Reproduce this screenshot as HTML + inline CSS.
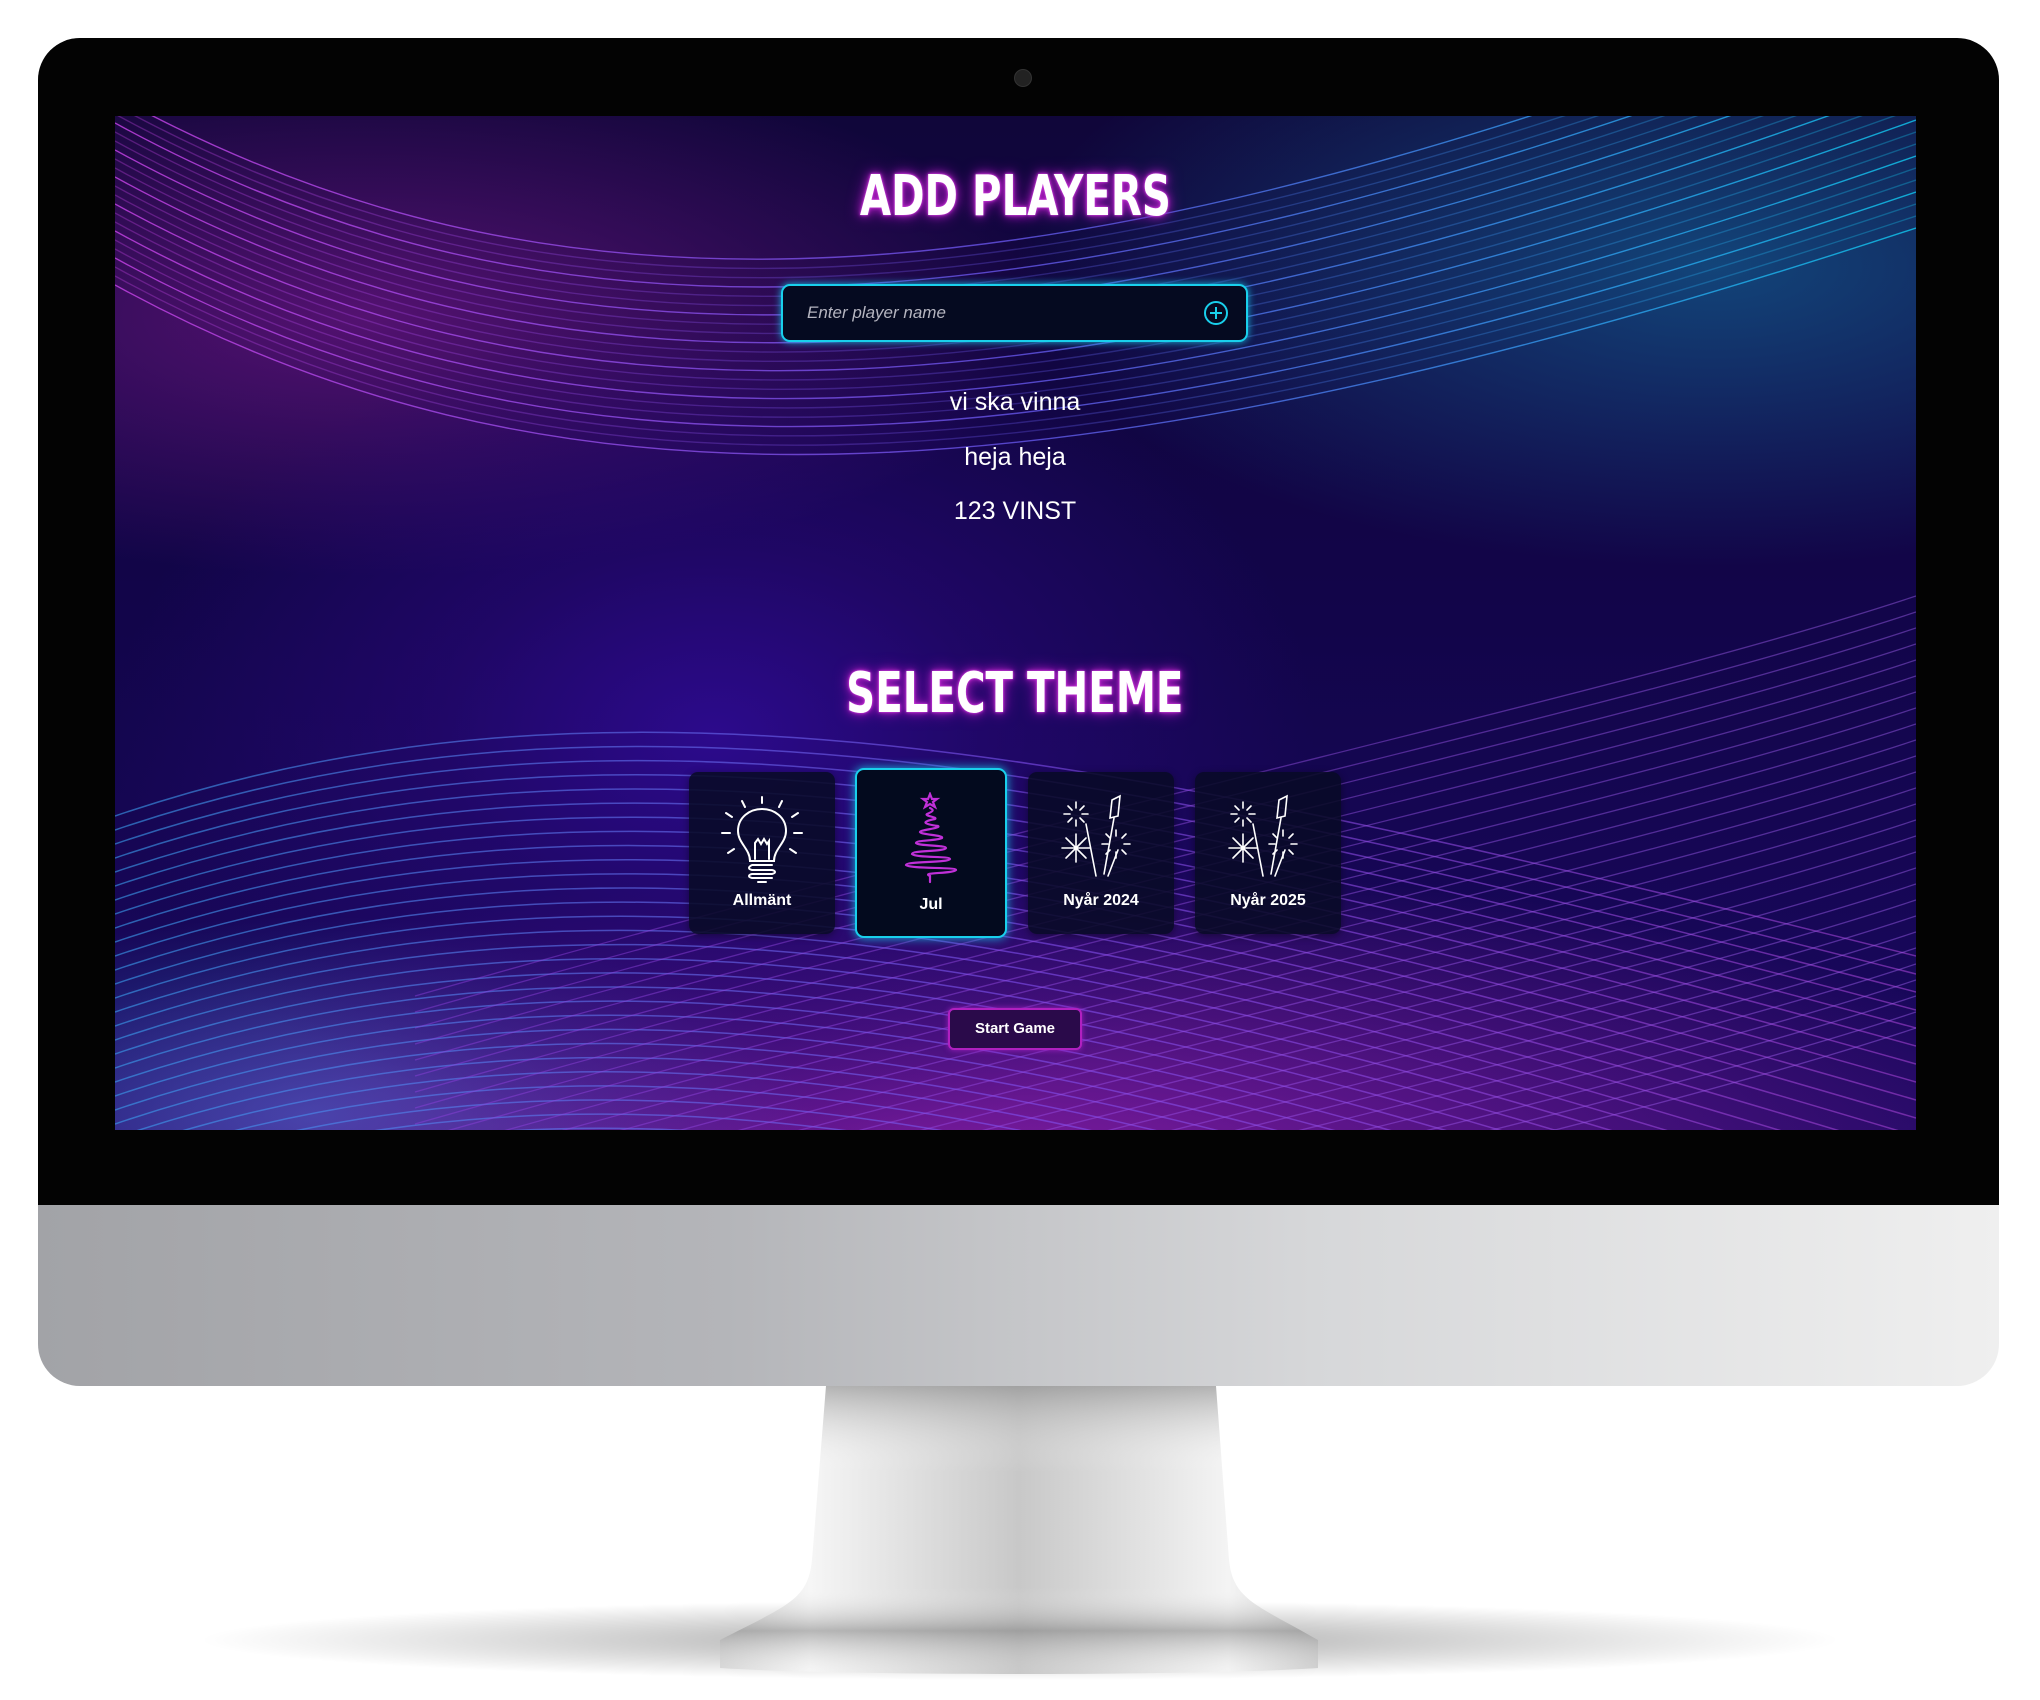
<!DOCTYPE html>
<html><head><meta charset="utf-8">
<style>
html,body{margin:0;padding:0;background:#fff;width:2040px;height:1700px;overflow:hidden;font-family:"Liberation Sans",sans-serif}
.abs{position:absolute}
#body{left:38px;top:38px;width:1961px;height:1348px;border-radius:42px;overflow:hidden;background:linear-gradient(90deg,#a2a3a7 0%,#b4b5b9 35%,#d6d7d9 65%,#efefef 100%)}
#bezel{left:0;top:0;width:1961px;height:1167px;background:#030303}
#cam{left:976px;top:31px;width:16px;height:16px;border-radius:50%;background:#222;border:1px solid #333}
#screen{left:77px;top:78px;width:1801px;height:1014px;overflow:hidden;
background:
radial-gradient(ellipse 600px 420px at 600px 620px,#2c0a8c 0%,rgba(40,8,120,.6) 45%,rgba(20,5,70,0) 100%),
radial-gradient(ellipse 700px 300px at 1600px 150px,rgba(20,120,170,.55) 0%,rgba(10,40,90,0) 100%),
radial-gradient(ellipse 700px 260px at 250px 200px,rgba(150,30,160,.5) 0%,rgba(60,10,90,0) 100%),
radial-gradient(ellipse 1100px 300px at 900px 1050px,rgba(190,40,200,.6) 0%,rgba(90,20,150,0) 100%),
radial-gradient(ellipse 500px 200px at 200px 1000px,rgba(60,140,230,.5) 0%,rgba(60,140,230,0) 100%),
linear-gradient(180deg,#10063a 0%,#12054a 50%,#1a0860 100%)}
#waves{position:absolute;left:0;top:0}
#content{position:absolute;left:-5px;top:0;width:1810px;height:1014px}
.title{position:absolute;left:0;width:1810px;text-align:center;font-family:"DejaVu Sans Condensed","DejaVu Sans",sans-serif;font-weight:bold;font-size:56px;color:#fff;
text-shadow:0 0 2px #d040e0,0 0 4px #c030d0,0 0 10px #b020c0,0 0 18px #9010b0}
.title span{display:inline-block;transform:scaleX(.8)}
#input{left:671px;top:168px;width:463px;height:54px;border:2px solid #19d0ec;border-radius:9px;background:#050a20;box-shadow:0 0 8px #19b8e0}
#input span{position:absolute;left:24px;top:17px;font-style:italic;font-size:17px;color:#b5b5c0}
#plus{position:absolute;right:18px;top:15px;width:20px;height:20px;border:2px solid #19d0ec;border-radius:50%}
#plus:before{content:"";position:absolute;left:4px;top:9px;width:12px;height:2px;background:#19d0ec}
#plus:after{content:"";position:absolute;left:9px;top:4px;width:2px;height:12px;background:#19d0ec}
.name{position:absolute;left:0;width:1810px;text-align:center;color:#fff;font-size:25px}
.card{position:absolute;top:656px;width:146px;height:162px;border-radius:9px;background:rgba(8,10,38,.88);box-shadow:0 2px 8px rgba(0,0,0,.4)}
.card .lbl{position:absolute;left:0;width:100%;top:120px;text-align:center;color:#fff;font-weight:bold;font-size:16px}
#screen .card svg{position:absolute;left:28px;top:22px}
#jul{left:745px;top:652px;width:148px;height:166px;border:2px solid #19d0ec;box-shadow:0 0 10px #19b8e0;background:#030a1e}
#start{left:838px;top:892px;width:130px;height:38px;border:2px solid #b020c0;border-radius:6px;background:#2a0a4a;color:#fff;font-weight:bold;font-size:15px;text-align:center;line-height:38px;box-shadow:0 0 6px #a020c0}
#stand{left:0;top:0}
</style></head><body>
<div id="body" class="abs">
 <div id="bezel" class="abs">
  <div id="cam" class="abs"></div>
  <div id="screen" class="abs">
   <svg id="waves" width="1801" height="1014"></svg>
   <div id="content">
   <div class="title" style="top:48px"><span>ADD PLAYERS</span></div>
   <div id="input" class="abs"><span>Enter player name</span><div id="plus"></div></div>
   <div class="name" style="top:272px">vi ska vinna</div>
   <div class="name" style="top:327px">heja heja</div>
   <div class="name" style="top:381px">123 VINST</div>
   <div class="title" style="top:545px"><span>SELECT THEME</span></div>
   <div class="card" style="left:579px">
    <svg width="90" height="90" viewBox="-5 -5 90 90" fill="none" stroke="#fff" stroke-width="2" stroke-linecap="round">
     <path d="M28 62 C28 50 16 44 16 32 C16 18 28 10 40 10 C52 10 64 18 64 32 C64 44 52 50 52 62 Z"/>
     <path d="M33 60 L33 44 L36 40 L39 45 L42 40 L45 45 L47 42 L47 60"/>
     <path d="M30 66 H50 M30 66 C26 68 26 70 30 71 H50 C54 72 54 74 50 75 H30 C26 76 26 78 30 79 H50 M36 83 H44"/>
     <path d="M40 -2 V4 M20 2 L23 8 M60 2 L57 8 M4 14 L10 18 M76 14 L70 18 M0 34 H8 M72 34 H80 M6 54 L12 50 M74 54 L68 50"/>
    </svg>
    <div class="lbl">Allmänt</div>
   </div>
   <div class="card" id="jul" style="left:745px;top:652px">
    <svg width="90" height="100" viewBox="-5 0 90 100" fill="none" stroke="#c030d8" stroke-width="2.2" stroke-linecap="round">
     <path d="M40 2 L42 7 L47 7 L43 10 L45 15 L40 12 L35 15 L37 10 L33 7 L38 7 Z"/>
     <path d="M40 16 C44 18 44 19 37 22 C34 24 48 25 45 27 C30 30 34 32 48 34 C52 36 30 38 30 40 C32 43 54 43 52 46 C46 49 26 48 26 51 C28 54 56 53 56 56 C54 60 22 58 22 62 C26 66 60 64 60 67 C58 71 16 69 16 73 C20 77 66 75 66 78 C62 82 30 80 40 84 V90"/>
    </svg>
    <div class="lbl" style="top:126px">Jul</div>
   </div>
   <div class="card" style="left:918px">
    <svg width="90" height="90" viewBox="0 0 90 90" fill="none" stroke="#fff" stroke-width="1.6" stroke-linecap="round">
     <path d="M20 8 V14 M20 26 V32 M8 20 H14 M26 20 H32 M12 12 L16 16 M24 24 L28 28 M28 12 L24 16 M16 24 L12 28"/>
     <path d="M10 44 L30 64 M30 44 L10 64 M20 40 V68 M6 54 H34"/>
     <path d="M60 36 V42 M60 58 V64 M46 50 H52 M68 50 H74 M50 40 L54 44 M66 56 L70 60 M70 40 L66 44 M54 56 L50 60"/>
     <path d="M56 6 L64 2 L62 22 L54 24 Z M58 24 L48 80 M30 30 L40 82 M62 56 L52 82"/>
    </svg>
    <div class="lbl">Nyår 2024</div>
   </div>
   <div class="card" style="left:1085px">
    <svg width="90" height="90" viewBox="0 0 90 90" fill="none" stroke="#fff" stroke-width="1.6" stroke-linecap="round">
     <path d="M20 8 V14 M20 26 V32 M8 20 H14 M26 20 H32 M12 12 L16 16 M24 24 L28 28 M28 12 L24 16 M16 24 L12 28"/>
     <path d="M10 44 L30 64 M30 44 L10 64 M20 40 V68 M6 54 H34"/>
     <path d="M60 36 V42 M60 58 V64 M46 50 H52 M68 50 H74 M50 40 L54 44 M66 56 L70 60 M70 40 L66 44 M54 56 L50 60"/>
     <path d="M56 6 L64 2 L62 22 L54 24 Z M58 24 L48 80 M30 30 L40 82 M62 56 L52 82"/>
    </svg>
    <div class="lbl">Nyår 2025</div>
   </div>
   <div id="start" class="abs">Start Game</div>
   </div>
  </div>
 </div>
</div>
<svg id="stand" class="abs" width="2040" height="1700">
 <defs>
  <linearGradient id="ng" x1="0" x2="1">
   <stop offset="0" stop-color="#d8d8d8"/><stop offset=".15" stop-color="#f6f6f6"/><stop offset=".5" stop-color="#c8c8c8"/><stop offset=".85" stop-color="#f4f4f4"/><stop offset="1" stop-color="#cfcfcf"/>
  </linearGradient>
  <linearGradient id="nv" x1="0" y1="0" x2="0" y2="1">
   <stop offset="0" stop-color="#888" stop-opacity=".6"/><stop offset=".3" stop-color="#fff" stop-opacity="0"/><stop offset=".7" stop-color="#fff" stop-opacity="0"/><stop offset=".85" stop-color="#777" stop-opacity=".5"/><stop offset="1" stop-color="#ddd" stop-opacity="0"/>
  </linearGradient>
  <radialGradient id="sh" cx=".5" cy=".5" r=".5"><stop offset="0" stop-color="#000" stop-opacity=".35"/><stop offset="1" stop-color="#000" stop-opacity="0"/></radialGradient>
 </defs>
 <ellipse cx="1020" cy="1640" rx="820" ry="40" fill="url(#sh)"/>
 <path d="M826 1386 H1216 L1229 1560 C1233 1600 1257 1605 1318 1640 L1318 1668 C1200 1676 840 1676 720 1668 L720 1640 C788 1605 808 1600 812 1560 Z" fill="url(#ng)"/>
 <path d="M826 1386 H1216 L1229 1560 C1233 1600 1257 1605 1318 1640 L1318 1668 C1200 1676 840 1676 720 1668 L720 1640 C788 1605 808 1600 812 1560 Z" fill="url(#nv)"/>
</svg>
<script>
var s=document.getElementById('waves'),h='';
h+='<defs><linearGradient id="g1" x1="0" x2="1"><stop offset="0" stop-color="#c040e0"/><stop offset=".5" stop-color="#6050e0"/><stop offset="1" stop-color="#10c0e8"/></linearGradient>'+
'<linearGradient id="g2" x1="0" x2="1"><stop offset="0" stop-color="#3aa0f0"/><stop offset=".5" stop-color="#8050f0"/><stop offset="1" stop-color="#a040d0"/></linearGradient>'+
'<linearGradient id="g3" x1="0" x2="1"><stop offset="0" stop-color="#9040e0"/><stop offset="1" stop-color="#a060f0"/></linearGradient></defs>';
for(var i=0;i<22;i++){var y=-20+i*9;
h+='<path d="M0 '+(y)+' C420 '+(y+230)+' 900 '+(y+240)+' 1801 '+(y-120+i*3)+'" stroke="url(#g1)" stroke-width="1.4" fill="none" opacity="'+(0.35+0.5*(i%3==0))+'"/>';}
for(var i=0;i<30;i++){var y=700+i*14;
h+='<path d="M0 '+y+' C500 '+(y-170)+' 1000 '+(y-60)+' 1801 '+(y+140+i*4)+'" stroke="url(#g2)" stroke-width="1.5" fill="none" opacity=".6"/>';}
for(var i=0;i<28;i++){var y=620+i*16;
h+='<path d="M1801 '+(y-140)+' C1500 '+(y-40)+' 1000 '+(y+60)+' 300 '+(y+260)+'" stroke="url(#g3)" stroke-width="1.3" fill="none" opacity=".45"/>';}
s.innerHTML=h;
</script>
</body></html>
